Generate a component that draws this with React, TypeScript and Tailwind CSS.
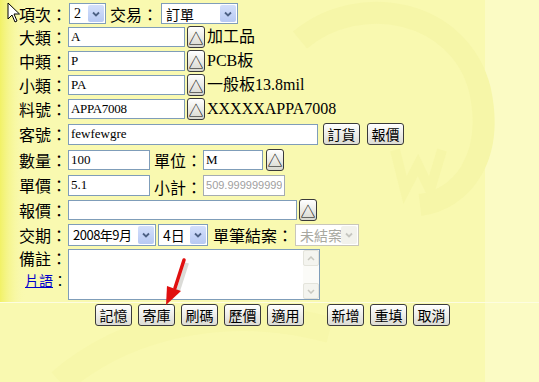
import React from "react";

// fonts
const CJK = "font-['Noto_Sans_CJK_TC','Noto_Sans',sans-serif]";
const SERIF = "font-['Liberation_Serif','Noto_Sans_CJK_TC',serif]";

const Label = ({ text, className = "" }: { text: string; className?: string }) => (
  <div className={`w-[67px] shrink-0 text-right text-[16px] leading-none text-black ${CJK} ${className}`}>{text}：</div>
);

const Field = ({ value, className = "" }: { value: string; className?: string }) => (
  <input
    defaultValue={value}
    className={`ml-[1px] h-[20px] border border-[#7f9db9] bg-white px-[2px] text-[13px] text-black outline-none ${SERIF} ${className}`}
  />
);

const Tri = ({ className = "" }: { className?: string }) => (
  <button
    className={`flex h-[22px] w-[18px] shrink-0 items-center justify-center rounded-[3px] border border-[#3a3a3a] bg-gradient-to-b from-white to-[#d8d8d0] text-[15px] leading-none text-black ${CJK} ${className}`}
  >
    △
  </button>
);

const Chevron = ({ disabled }: { disabled?: boolean }) => (
  <div
    className={`flex h-full w-[16px] items-center justify-center rounded-[2px] ${
      disabled ? "bg-[#f2f2ec]" : "bg-gradient-to-b from-[#d4e0fb] to-[#b7c9f3]"
    }`}
  >
    <svg width="8" height="6" viewBox="0 0 8 6">
      <path d="M1 1.5 L4 4.5 L7 1.5" fill="none" stroke={disabled ? "#c6c6c0" : "#4d6185"} strokeWidth="1.8" />
    </svg>
  </div>
);

const Select = ({
  value,
  className = "",
  textClass = "",
  disabled,
}: {
  value: string;
  className?: string;
  textClass?: string;
  disabled?: boolean;
}) => (
  <div
    className={`flex h-[21px] items-stretch border bg-white p-[1px] ${
      disabled ? "border-[#c9c7ba]" : "border-[#7f9db9]"
    } ${className}`}
  >
    <div className={`flex flex-1 items-center overflow-hidden whitespace-nowrap pl-[3px] leading-none ${disabled ? "text-[#a8a8a0]" : "text-black"} ${textClass}`}>
      {value}
    </div>
    <Chevron disabled={disabled} />
  </div>
);

const Btn = ({ text }: { text: string }) => (
  <button
    className={`flex h-[22px] w-[37px] shrink-0 items-center justify-center rounded-[3px] border border-[#3a3a3a] bg-gradient-to-b from-white to-[#dcdcd4] text-[14px] leading-none text-black ${CJK}`}
  >
    {text}
  </button>
);

const Row = ({ h, children }: { h: string; children: React.ReactNode }) => (
  <div className={`flex items-center ${h}`}>{children}</div>
);

export default function App() {
  return (
    <div className="relative h-[382px] w-[539px] overflow-hidden bg-[#f9f9b0]">
      {/* background watermark */}
      <svg className="pointer-events-none absolute inset-0" width="539" height="382">
        <defs>
          <linearGradient id="leftband" x1="0" x2="1" y1="0" y2="0">
            <stop offset="0" stopColor="#f1f166" />
            <stop offset="1" stopColor="#f9f9b0" stopOpacity="0" />
          </linearGradient>
        </defs>
        <rect x="485" y="0" width="54" height="382" fill="#fbfbc4" />
        <rect x="0" y="0" width="26" height="302" fill="url(#leftband)" />
        <path d="M300 40 C360 -10 460 10 480 90 C495 160 460 200 420 205" fill="none" stroke="#f6f6a8" strokeWidth="22" />
        <path d="M395 150 L405 190 L418 165 L430 190 L442 150" fill="none" stroke="#f6f6a8" strokeWidth="10" />
        <path d="M60 382 C120 330 220 300 330 330" fill="none" stroke="#f7f7aa" strokeWidth="26" />
        <rect x="0" y="302" width="539" height="1" fill="#fdfde0" />
      </svg>

      <div className="relative flex flex-col pt-[2px]">
        <Row h="h-[23px]">
          <Label text="項次" />
          <Select value="2" className="ml-[2px] w-[37px]" textClass={`text-[14px] ${SERIF}`} />
          <div className={`ml-[4px] text-[16px] leading-none ${CJK}`}>交易：</div>
          <Select value="訂單" className="ml-[3px] w-[77px]" textClass={`text-[14px] ${CJK}`} />
        </Row>
        <Row h="h-[24px]">
          <Label text="大類" />
          <Field value="A" className="w-[117px]" />
          <Tri className="ml-[2px]" />
          <span className={`ml-[2px] text-[16px] leading-none ${SERIF}`}>加工品</span>
        </Row>
        <Row h="h-[24px]">
          <Label text="中類" />
          <Field value="P" className="w-[117px]" />
          <Tri className="ml-[2px]" />
          <span className={`ml-[2px] text-[16px] leading-none ${SERIF}`}>PCB板</span>
        </Row>
        <Row h="h-[24px]">
          <Label text="小類" />
          <Field value="PA" className="w-[117px]" />
          <Tri className="ml-[2px]" />
          <span className={`ml-[2px] text-[16px] leading-none ${SERIF}`}>一般板13.8mil</span>
        </Row>
        <Row h="h-[24px]">
          <Label text="料號" />
          <Field value="APPA7008" className="w-[117px] tracking-[-0.3px]" />
          <Tri className="ml-[2px]" />
          <span className={`ml-[2px] text-[16px] leading-none ${SERIF}`}>XXXXXAPPA7008</span>
        </Row>
        <Row h="h-[26px]">
          <Label text="客號" />
          <Field value="fewfewgre" className="h-[21px] w-[250px]" />
          <div className="ml-[5px]">
            <Btn text="訂貨" />
          </div>
          <div className="ml-[7px]">
            <Btn text="報價" />
          </div>
        </Row>
        <Row h="h-[25px]">
          <Label text="數量" />
          <Field value="100" className="w-[82px]" />
          <div className={`ml-[4px] text-[16px] leading-none ${CJK}`}>單位：</div>
          <Field value="M" className="w-[60px]" />
          <Tri className="ml-[3px]" />
        </Row>
        <Row h="h-[26px]">
          <Label text="單價" />
          <Field value="5.1" className="h-[21px] w-[82px]" />
          <div className={`ml-[4px] mt-[3px] text-[16px] leading-none ${CJK}`}>小計：</div>
          <input
            disabled
            defaultValue="509.999999999"
            className="ml-[1px] h-[21px] w-[82px] border border-[#a5acb2] bg-white px-[2px] text-[11px] text-[#a0a0a0] font-['Liberation_Sans',sans-serif]"
          />
        </Row>
        <Row h="h-[24px]">
          <Label text="報價" />
          <Field value="" className="w-[229px]" />
          <Tri className="ml-[2px]" />
        </Row>
        <Row h="h-[25px]">
          <Label text="交期" />
          <Select value="2008年9月" className="ml-[1px] h-[22px] w-[88px]" textClass={`text-[13px] tracking-[-0.5px] ${CJK}`} />
          <Select value="4日" className="ml-[2px] h-[22px] w-[50px]" textClass={`text-[14px] ${CJK}`} />
          <div className={`ml-[5px] text-[16px] leading-none ${CJK}`}>單筆結案：</div>
          <Select value="未結案" disabled className="ml-[2px] h-[22px] w-[64px]" textClass={`text-[14px] ${CJK}`} />
        </Row>
        <div className="flex h-[54px] items-start pt-[2px]">
          <div className="flex w-[67px] shrink-0 flex-col items-end">
            <div className={`mt-[1px] text-[16px] leading-none ${CJK}`}>備註：</div>
            <div className={`mt-[7px] flex items-center text-[14px] leading-none ${CJK}`}>
              <a className="text-[#0000cc] underline">片語</a>
              <span>：</span>
            </div>
          </div>
          <div className="ml-[1px] flex h-[51px] w-[252px] border border-[#7f9db9] bg-white">
            <textarea className="flex-1 resize-none outline-none" />
            <div className="flex w-[16px] flex-col justify-between bg-[#fbfbf8]">
              <div className="flex h-[16px] items-center justify-center rounded-[2px] border border-[#e4e4dc] bg-[#f4f4ef]">
                <svg width="8" height="5" viewBox="0 0 8 5">
                  <path d="M1 4 L4 1 L7 4" fill="none" stroke="#c8c8c0" strokeWidth="1.5" />
                </svg>
              </div>
              <div className="flex h-[16px] items-center justify-center rounded-[2px] border border-[#e4e4dc] bg-[#f4f4ef]">
                <svg width="8" height="5" viewBox="0 0 8 5">
                  <path d="M1 1 L4 4 L7 1" fill="none" stroke="#c8c8c0" strokeWidth="1.5" />
                </svg>
              </div>
            </div>
          </div>
        </div>

        <div className="mt-[3px] flex items-center pl-[95px]">
          <div className="flex gap-[6px]">
            <Btn text="記憶" />
            <Btn text="寄庫" />
            <Btn text="刷碼" />
            <Btn text="歷價" />
            <Btn text="適用" />
          </div>
          <div className="ml-[23px] flex gap-[6px]">
            <Btn text="新增" />
            <Btn text="重填" />
            <Btn text="取消" />
          </div>
        </div>
      </div>

      {/* mouse cursor */}
      <svg className="pointer-events-none absolute left-[7px] top-[2px]" width="14" height="21" viewBox="0 0 14 21">
        <path d="M1 1 L1 17 L5 13 L8 20 L10 19 L7 12 L12.5 12 Z" fill="white" stroke="black" strokeWidth="1" strokeLinejoin="round" />
      </svg>

      {/* red arrow */}
      <svg className="pointer-events-none absolute left-[150px] top-[255px]" width="50" height="55" viewBox="0 0 50 55">
        <path d="M35 6 L26 34" stroke="#b8b8b0" strokeWidth="4" opacity="0.5" transform="translate(2 2)" />
        <path d="M34 5 L25 33" stroke="#e01010" strokeWidth="3.5" strokeLinecap="round" />
        <polygon points="16,50 17,31 31,36" fill="#e01010" />
      </svg>
    </div>
  );
}
